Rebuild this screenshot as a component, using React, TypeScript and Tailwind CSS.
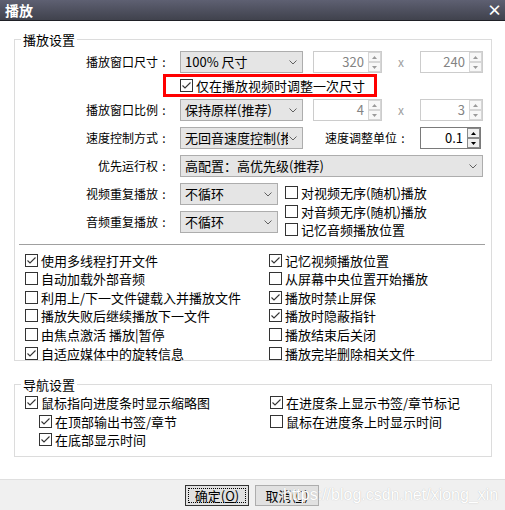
import React from "react";

type Kids = { children?: React.ReactNode };

function Box({ on }: { on?: boolean }) {
  return (
    <span className="flex h-[13px] w-[13px] shrink-0 items-center justify-center border border-[#333333] bg-white">
      {on && (
        <svg width="11" height="11" viewBox="0 0 11 11">
          <polyline points="1.5,5.5 4,8 9.5,2.5" fill="none" stroke="#333333" strokeWidth="1.1" />
        </svg>
      )}
    </span>
  );
}

function Check({ on, children, className = "" }: Kids & { on?: boolean; className?: string }) {
  return (
    <div className={"flex h-[13px] items-center gap-[3px] text-[13px] leading-[13px] " + className}>
      <Box on={on} />
      <span className="whitespace-nowrap">{children}</span>
    </div>
  );
}

function Label({ children }: Kids) {
  return (
    <div className="flex w-[155px] shrink-0 justify-end text-[12px] leading-[16px]">
      <span className="whitespace-nowrap">{children}</span>
      <span className="w-[12px] text-center">:</span>
    </div>
  );
}

function Chevron() {
  return (
    <svg className="ml-auto shrink-0" width="8" height="5" viewBox="0 0 8 5">
      <polyline points="0.5,0.5 4,4 7.5,0.5" fill="none" stroke="#606060" strokeWidth="1" />
    </svg>
  );
}

function Combo({ text, className }: { text: string; className: string }) {
  return (
    <div className={"ml-[10px] flex h-[22px] shrink-0 items-center border border-[#adadad] bg-[#e5e5e5] pl-[4px] pr-[5px] " + className}>
      <span className="whitespace-nowrap text-[13px] leading-[20px]">{text}</span>
      <Chevron />
    </div>
  );
}

function Arrow({ up, active }: { up?: boolean; active?: boolean }) {
  return (
    <div
      className={
        "flex h-[10px] items-center justify-center border " +
        (active ? "border-[#8a8a8a] bg-[#f0f0f0]" : "border-[#d6d6d6] bg-[#f7f7f7]")
      }
    >
      <svg width="5" height="3" viewBox="0 0 5 3">
        <polygon points={up ? "0,3 2.5,0 5,3" : "0,0 2.5,3 5,0"} fill={active ? "#000000" : "#9a9a9a"} />
      </svg>
    </div>
  );
}

function Spin({ value, className, active }: { value: string; className: string; active?: boolean }) {
  return (
    <div
      className={
        "flex h-[22px] shrink-0 border bg-white " +
        (active ? "border-[#7a7a7a] " : "border-[#cccccc] ") +
        className
      }
    >
      <span
        className={
          "flex flex-1 items-center justify-end pr-[4px] text-[13px] leading-[16px] " +
          (active ? "text-black" : "text-[#838383]")
        }
      >
        {value}
      </span>
      <div className="flex w-[13px] flex-col">
        <Arrow up active={active} />
        <Arrow active={active} />
      </div>
    </div>
  );
}

function Times() {
  return <span className="w-[38px] text-center text-[12px] text-[#a0a0a0]">x</span>;
}

export default function App() {
  return (
    <div className="h-[510px] w-[505px] overflow-hidden bg-white font-['Noto_Sans_CJK_SC',sans-serif] text-black">
      {/* title bar */}
      <div className="flex h-[21px] items-center justify-between border-b border-[#1f2026] bg-linear-to-b from-[#5e6072] to-[#40424d] pl-[5px] pr-[3px] text-white">
        <span className="text-[14px] font-bold leading-[16px]">播放</span>
        <span className="text-[15px] font-bold leading-[16px]">×</span>
      </div>

      <div className="h-[458px] pl-[14px] pt-[11px]">
        {/* playback settings */}
        <fieldset className="w-[478px] border border-[#dcdcdc] pt-[4px]">
          <legend className="ml-[6px] px-[2px] text-[13px] leading-[15px]">播放设置</legend>

          <div className="flex h-[22px] items-center">
            <Label>播放窗口尺寸</Label>
            <Combo text="100% 尺寸" className="w-[123px]" />
            <Spin value="320" className="ml-[10px] w-[69px]" />
            <Times />
            <Spin value="240" className="w-[63px]" />
          </div>

          <div className="mt-[1px] flex h-[23px] pl-[148px]">
            <div className="flex w-[214px] items-center border-[3px] border-[#ff0000] pl-[14px]">
              <Check on>仅在播放视频时调整一次尺寸</Check>
            </div>
          </div>

          <div className="mt-[2px] flex h-[22px] items-center">
            <Label>播放窗口比例</Label>
            <Combo text="保持原样(推荐)" className="w-[123px]" />
            <Spin value="4" className="ml-[10px] w-[69px]" />
            <Times />
            <Spin value="3" className="w-[63px]" />
          </div>

          <div className="mt-[6px] flex h-[22px] items-center">
            <Label>速度控制方式</Label>
            <div className="ml-[10px] flex h-[22px] w-[123px] shrink-0 items-center border border-[#adadad] bg-[#e5e5e5] pl-[4px] pr-[5px]">
              <span className="w-[103px] overflow-hidden whitespace-nowrap text-[13px] leading-[20px]">无回音速度控制(推荐)</span>
              <Chevron />
            </div>
            <div className="ml-[22px] flex text-[12px] leading-[16px]">
              <span className="whitespace-nowrap">速度调整单位</span>
              <span className="w-[12px] text-center">:</span>
            </div>
            <Spin value="0.1" active className="ml-[11px] w-[61px]" />
          </div>

          <div className="mt-[6px] flex h-[22px] items-center">
            <Label>优先运行权</Label>
            <Combo text="高配置：高优先级(推荐)" className="w-[303px]" />
          </div>

          <div className="mt-[6px] flex h-[57px]">
            <div className="flex flex-col gap-[6px]">
              <div className="flex h-[22px] items-center">
                <Label>视频重复播放</Label>
                <Combo text="不循环" className="w-[98px]" />
              </div>
              <div className="flex h-[22px] items-center">
                <Label>音频重复播放</Label>
                <Combo text="不循环" className="w-[98px]" />
              </div>
            </div>
            <div className="ml-[7px] flex flex-col gap-[5.67px] pt-[3px]">
              <Check>对视频无序(随机)播放</Check>
              <Check>对音频无序(随机)播放</Check>
              <Check>记忆音频播放位置</Check>
            </div>
          </div>

          <div className="ml-[4px] mr-[6px] mt-[4px] border-t border-[#a0a0a0]" />

          <div className="mt-[8.5px] flex pl-[10px]">
            <div className="flex w-[244px] flex-col gap-[5.67px]">
              <Check on>使用多线程打开文件</Check>
              <Check>自动加载外部音频</Check>
              <Check>利用上/下一文件键载入并播放文件</Check>
              <Check>播放失败后继续播放下一文件</Check>
              <Check>由焦点激活 播放|暂停</Check>
              <Check on>自适应媒体中的旋转信息</Check>
            </div>
            <div className="flex flex-col gap-[5.67px]">
              <Check on>记忆视频播放位置</Check>
              <Check>从屏幕中央位置开始播放</Check>
              <Check on>播放时禁止屏保</Check>
              <Check on>播放时隐蔽指针</Check>
              <Check>播放结束后关闭</Check>
              <Check>播放完毕删除相关文件</Check>
            </div>
          </div>
        </fieldset>

        {/* navigation settings */}
        <fieldset className="mt-[16px] w-[478px] border border-[#dcdcdc] pb-[9.3px] pt-[4.5px]">
          <legend className="ml-[6px] px-[2px] text-[13px] leading-[15px]">导航设置</legend>
          <div className="flex pl-[10px]">
            <div className="flex w-[245px] flex-col gap-[5.6px]">
              <Check on>鼠标指向进度条时显示缩略图</Check>
              <Check on className="ml-[14px]">在顶部输出书签/章节</Check>
              <Check on className="ml-[14px]">在底部显示时间</Check>
            </div>
            <div className="flex flex-col gap-[5.6px]">
              <Check on>在进度条上显示书签/章节标记</Check>
              <Check>鼠标在进度条上时显示时间</Check>
            </div>
          </div>
        </fieldset>
      </div>

      {/* footer */}
      <div className="relative h-[31px] border-t border-[#dfdfdf] bg-[#f0f0f0]">
        <div className="flex gap-[6px] pl-[185px] pt-[5px]">
          <div className="h-[21px] w-[64px] border border-[#333333] bg-[#e1e1e1] p-[2px]">
            <div className="flex h-full items-center justify-center border border-dotted border-black text-[13px] leading-[15px]">
              确定(<span className="underline">O</span>)
            </div>
          </div>
          <div className="flex h-[21px] w-[64px] items-center justify-center border border-[#adadad] bg-[#e1e1e1] text-[13px] leading-[15px]">
            取消(<span className="underline">C</span>)
          </div>
        </div>
        <span className="absolute left-[283px] top-[3px] whitespace-nowrap font-['Liberation_Sans',sans-serif] text-[16px] text-white [text-shadow:0_0_1px_#b4b4b4]">
          https://blog.csdn.net/xiong_xin
        </span>
      </div>
    </div>
  );
}
